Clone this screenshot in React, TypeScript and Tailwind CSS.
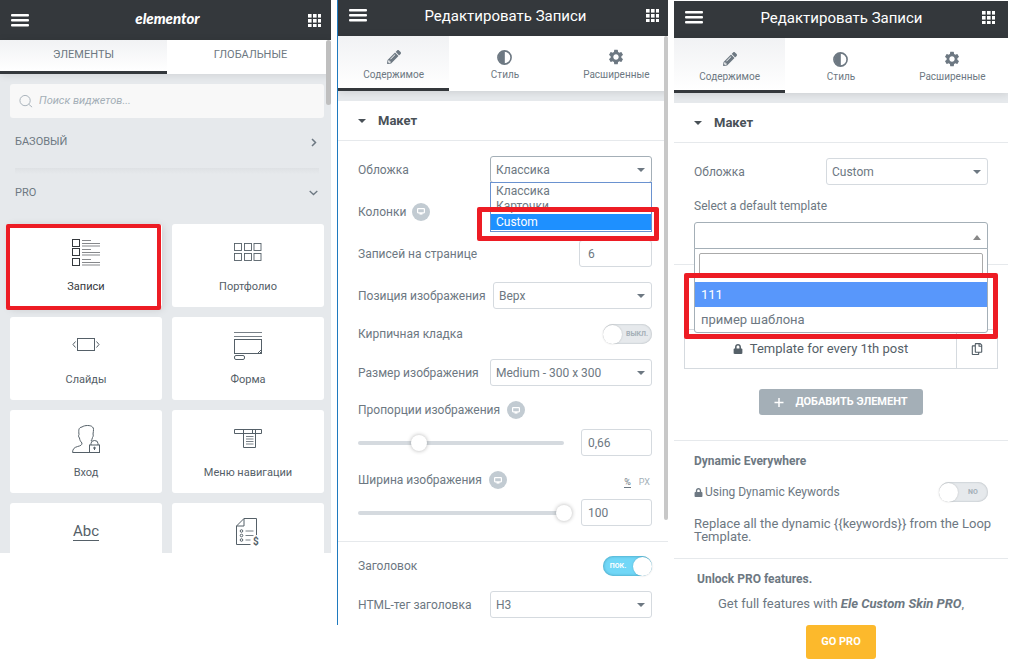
import React, { ReactNode, useState } from "react";
import { FaLock, FaPencilAlt, FaRegCopy } from "react-icons/fa";
import { MdSettings } from "react-icons/md";

function MenuIcon() {
  return (
    <svg width="18" height="13" viewBox="0 0 18 13" fill="currentColor" aria-hidden="true">
      <rect width="18" height="2.6" rx="1" />
      <rect y="5" width="18" height="2.6" rx="1" />
      <rect y="10" width="18" height="2.6" rx="1" />
    </svg>
  );
}

function GridIcon() {
  const steps = [0, 5, 10];
  return (
    <svg width="13" height="13" viewBox="0 0 13 13" fill="currentColor" aria-hidden="true">
      {steps.map((y) => steps.map((x) => <rect key={`${x}-${y}`} x={x} y={y} width="3.6" height="3.6" />))}
    </svg>
  );
}

function ContrastIcon() {
  return (
    <svg width="15" height="15" viewBox="0 0 15 15" aria-hidden="true">
      <circle cx="7.5" cy="7.5" r="6.6" fill="none" stroke="currentColor" strokeWidth="1.6" />
      <path d="M7.8 1v13A6.5 6.5 0 0 1 7.8 1z" fill="currentColor" />
    </svg>
  );
}

function PanelHeader({ tall, children }: { tall?: boolean; children: ReactNode }) {
  return (
    <header className={`flex items-center justify-between bg-[#34383c] pl-[11px] pr-[13px] text-white ${tall ? "h-10" : "h-[37px] pb-[4px]"}`}>
      <button aria-label="Menu"><MenuIcon /></button>
      {children}
      <button aria-label="Widgets"><GridIcon /></button>
    </header>
  );
}

function EditTabs() {
  const tabs = [
    { label: "Содержимое", icon: <FaPencilAlt size={14} /> },
    { label: "Стиль", icon: <ContrastIcon /> },
    { label: "Расширенные", icon: <MdSettings size={18} /> },
  ];
  return (
    <nav className="relative z-10 grid h-[55px] grid-cols-3 bg-white shadow-[0_1px_8px_rgba(0,0,0,0.12)]">
      {tabs.map((t, i) => (
        <button
          key={t.label}
          className={`flex flex-col items-center gap-px border-b-[3px] pt-3 text-[10px] leading-4 text-[#6d7882] ${
            i === 0 ? "border-[#34383c] bg-linear-to-b from-[#f1f2f4] to-white" : "border-transparent"
          }`}
        >
          <span className="flex h-[18px] items-center">{t.icon}</span>
          {t.label}
        </button>
      ))}
    </nav>
  );
}

function SectionTitle() {
  return (
    <>
      <div className="h-[10px] bg-[#e6e9ec]" />
      <button className="flex h-10 w-full items-center gap-3 border-b border-[#e6e9ec] pl-5 text-[13px] font-bold text-[#495157]">
        <svg width="8" height="4" viewBox="0 0 8 4" fill="currentColor" aria-hidden="true"><path d="M0 0h8L4 4z" /></svg>
        Макет
      </button>
    </>
  );
}

function Select({ id, options, className, active }: { id: string; options: string[]; className: string; active?: boolean }) {
  return (
    <div className={`relative ${className}`}>
      <select
        id={id}
        className={`block h-[27px] w-full appearance-none rounded-[3px] border bg-white pl-[5px] text-[12px] text-[#6d7882] outline-none ${
          active ? "border-[#a4afb7]" : "border-[#d5dadf]"
        }`}
      >
        {options.map((o) => <option key={o}>{o}</option>)}
      </select>
      <svg className="pointer-events-none absolute right-[7px] top-[12px] text-[#6d7882]" width="8" height="4" viewBox="0 0 8 4" fill="currentColor" aria-hidden="true">
        <path d="M0 0h8L4 4z" />
      </svg>
    </div>
  );
}

function Switch({ id, on, text }: { id: string; on?: boolean; text: string }) {
  const [checked, setChecked] = useState(!!on);
  return (
    <label
      htmlFor={id}
      className={`flex h-5 w-[49px] items-center justify-between rounded-full text-[7px] font-bold ${
        checked
          ? "flex-row-reverse bg-[#71d7f7] text-white shadow-[inset_0_0_3px_#3b93b0]"
          : "bg-[#e6e9ec] text-[#a4afb7] shadow-[inset_0_0_2px_#a4abb1]"
      }`}
    >
      <input id={id} type="checkbox" className="sr-only" checked={checked} onChange={() => setChecked(!checked)} />
      <span className="size-[19px] rounded-full bg-white shadow-[0_0_2px_rgba(0,0,0,0.2)]" />
      <span className="flex-1 text-center">{text}</span>
    </label>
  );
}

function Desktop() {
  return (
    <button aria-label="Desktop" className="flex size-[18px] items-center justify-center rounded-full bg-[#c2cbd2] text-white">
      <svg width="8" height="7" viewBox="0 0 8 7" aria-hidden="true">
        <rect x=".6" y=".6" width="6.8" height="4.2" rx=".5" fill="none" stroke="currentColor" strokeWidth="1.2" />
        <path d="M2.5 5h3v1.6h-3z" fill="currentColor" />
      </svg>
    </button>
  );
}

function Row({ id, label, children }: { id: string; label: string; children: ReactNode }) {
  return (
    <div className="flex items-center justify-between">
      <label htmlFor={id}>{label}</label>
      {children}
    </div>
  );
}

function NumberBox({ id, value, className }: { id: string; value: string; className: string }) {
  return (
    <input
      id={id}
      defaultValue={value}
      className={`h-[27px] rounded-[3px] border border-[#d5dadf] bg-white text-[12px] text-[#6d7882] outline-none ${className}`}
    />
  );
}

function SliderField({ id, label, value, display, units }: { id: string; label: string; value: number; display: string; units?: boolean }) {
  return (
    <div className="flex flex-col gap-[10px]">
      <div className="flex h-[18px] items-center">
        <label htmlFor={id} className="mr-[7px]">{label}</label>
        <Desktop />
        {units && (
          <div className="ml-auto flex gap-2 pr-[2px] pt-1 text-[9px] leading-[10px]">
            <button className="border-b border-[#6d7882]">%</button>
            <button className="text-[#a4afb7]">PX</button>
          </div>
        )}
      </div>
      <div className="flex items-center">
        <div className="relative min-w-0 flex-1">
          <span className="absolute left-0 right-2 top-[6px] h-1 rounded-full bg-[#d5dadf]" />
          <input
            id={id}
            type="range"
            defaultValue={value}
            className="relative block h-4 w-full appearance-none bg-transparent [&::-webkit-slider-thumb]:size-4 [&::-webkit-slider-thumb]:appearance-none [&::-webkit-slider-thumb]:rounded-full [&::-webkit-slider-thumb]:bg-white [&::-webkit-slider-thumb]:shadow-[0_0_4px_rgba(0,0,0,0.3)]"
          />
        </div>
        <NumberBox id={`${id}-value`} value={display} className="ml-[9px] w-[71px] pl-[6px]" />
      </div>
    </div>
  );
}

const stroke = { fill: "none", stroke: "currentColor", strokeWidth: 1 };

function PostsIcon() {
  return (
    <svg width="28" height="28" viewBox="0 0 28 28" {...stroke} aria-hidden="true">
      {[0, 9, 19].map((y) => (
        <g key={y}>
          <rect x=".5" y={y + 0.5} width="7" height="7" />
          <path d={`M10 ${y + 1.5}h9M10 ${y + 4.5}h18M10 ${y + 7}h18`} strokeWidth=".6" />
        </g>
      ))}
    </svg>
  );
}

function PortfolioIcon() {
  return (
    <svg width="28" height="28" viewBox="0 0 28 28" {...stroke} aria-hidden="true">
      {[4.5, 14.5].map((y) => [0.5, 10.5, 20].map((x) => <rect key={`${x}-${y}`} x={x} y={y} width="7" height="7" strokeWidth=".9" />))}
    </svg>
  );
}

function SlidesIcon() {
  return (
    <svg width="28" height="28" viewBox="0 0 28 28" {...stroke} aria-hidden="true">
      <rect x="5.5" y="6.5" width="17" height="12" />
      <path d="M3.5 9.5L1 12.5l2.5 3M24.5 9.5l2.5 3-2.5 3" />
    </svg>
  );
}

function FormIcon() {
  return (
    <svg width="28" height="28" viewBox="0 0 28 28" {...stroke} aria-hidden="true">
      <path d="M0 .5h28M0 4.5h28" strokeWidth=".8" />
      <rect x=".5" y="7.5" width="27" height="14" />
      <path d="M27 18l-3 3M27 20l-1 1" />
      <rect x=".5" y="23.5" width="10" height="4" rx="1.5" />
    </svg>
  );
}

function LoginIcon() {
  return (
    <svg width="28" height="28" viewBox="0 0 28 28" {...stroke} aria-hidden="true">
      <path d="M17 27.5H.6c0-3.500 1.500-5 5-6 3-.8 4.400-1.300 4.400-3.500-1.500-1.500-2.300-3-2.500-5-1.300-1.500-1-2.500-.5-3.500C6.500 5 6.500 2.500 10 2c2.500-2 9-2 10.500 0 1.500 1 1 3.500.5 7 .5 1.500.2 2.500-.5 3.500-.3 1.500-.8 2.500-1.500 3.500" />
      <rect x="17.500" y="20" width="10" height="7.500" />
      <path d="M19 20v-1.500a3.500 3 0 0 1 7 0V20M22.500 22.500v2.500" />
      <circle cx="22.500" cy="23" r=".8" fill="currentColor" />
    </svg>
  );
}

function NavMenuIcon() {
  return (
    <svg width="28" height="28" viewBox="0 0 28 28" {...stroke} aria-hidden="true">
      <path d="M.5 4.500h27v4H.5zM9.500 4.500v18h12V4.500M18.500 4.500v4" />
      <path d="M12 11.500h7.500M12 14h7.500M12 16.500h7.500M12 19h7.500" strokeWidth=".8" />
    </svg>
  );
}

function HeadlineIcon() {
  return (
    <span className="block text-[15px] leading-7">
      <span className="border-b border-current leading-[15px]">Abc</span>
    </span>
  );
}

function PriceListIcon() {
  return (
    <svg width="28" height="28" viewBox="0 0 28 28" {...stroke} className="overflow-visible" aria-hidden="true">
      <path d="M16.500 26.500H2.500V8L10 .5h12.500V17M2.500 8H10V.5" />
      <circle cx="7.500" cy="13" r="1.300" /><circle cx="7.500" cy="17.500" r="1.300" /><circle cx="7.500" cy="22" r="1.300" />
      <path d="M11.500 13h8M11.500 17.500h8M11.500 22h5" strokeWidth=".8" />
      <text x="19" y="27" fill="currentColor" stroke="none" fontSize="10" fontWeight="700">$</text>
    </svg>
  );
}

const widgets = [
  { label: "Записи", icon: <PostsIcon />, marked: true },
  { label: "Портфолио", icon: <PortfolioIcon /> },
  { label: "Слайды", icon: <SlidesIcon /> },
  { label: "Форма", icon: <FormIcon /> },
  { label: "Вход", icon: <LoginIcon /> },
  { label: "Меню навигации", icon: <NavMenuIcon /> },
];

function WidgetsPanel() {
  return (
    <section className="relative overflow-hidden bg-[#e6e9ec]">
      <div className="-mr-[3px]">
        <PanelHeader tall>
          <h1 className="pb-1 pr-[2px] font-['Lato',sans-serif] text-[15px] font-black italic leading-5">elementor</h1>
        </PanelHeader>
        <nav className="grid h-[34px] grid-cols-2 bg-white text-[11px] text-[#6d7882] shadow-[0_1px_8px_rgba(0,0,0,0.1)]">
          <button className="border-b-[3px] border-[#34383c] bg-linear-to-b from-[#f1f2f4] to-white">ЭЛЕМЕНТЫ</button>
          <button className="border-b-[3px] border-transparent">ГЛОБАЛЬНЫЕ</button>
        </nav>
      </div>
      <div className="absolute right-0 top-10 z-20 h-[65px] w-[5px] rounded-[3px] bg-[#bfbfbf]" />
      <div className="pl-[10px] pr-[7px] pt-[10px]">
        <label className="flex h-[34px] items-center gap-[6px] rounded-[3px] bg-[#f8f8f8] pl-[9px] text-[#a4afb7]">
          <svg width="15" height="15" viewBox="0 0 15 15" {...stroke} aria-hidden="true">
            <circle cx="6.500" cy="6.500" r="5.500" /><path d="M10.500 10.500l3.500 3" />
          </svg>
          <input aria-label="Поиск виджетов" placeholder="Поиск виджетов..." className="w-full bg-transparent text-[11px] italic outline-none placeholder:text-[#a4afb7]" />
        </label>
        <button className="flex h-12 w-full items-center justify-between pl-[5px] pr-[7px] text-[11px]">
          БАЗОВЫЙ
          <svg width="6" height="9" viewBox="0 0 6 9" fill="none" stroke="currentColor" strokeWidth="1.500" aria-hidden="true"><path d="M1 1l3.500 3.500L1 8" /></svg>
        </button>
        <div className="mx-[5px] mt-[2px] h-[6px] bg-linear-to-b from-[#dee1e4] to-[#e6e9ec]" />
        <button className="mb-3 flex h-[38px] w-full items-center justify-between pl-[5px] pr-[6px] text-[11px]">
          PRO
          <svg width="9" height="6" viewBox="0 0 9 6" fill="none" stroke="currentColor" strokeWidth="1.300" aria-hidden="true"><path d="M.7 1l3.800 3.500L8.300 1" /></svg>
        </button>
        <div className="grid grid-cols-2 gap-[10px] text-[11px] text-[#556068]">
          {widgets.map((w) => (
            <button key={w.label} className={`relative flex h-[83px] flex-col items-center rounded-[3px] bg-white pt-[15px] ${w.marked ? "text-[#34383c] shadow-[0_2px_8px_rgba(0,0,0,0.15)]" : ""}`}>
              {w.icon}
              <span className="mt-3 leading-4">{w.label}</span>
              {w.marked && <span className="absolute -bottom-[3px] -left-1 right-px top-0 rounded-[2px] border-4 border-[#ed1c24]" />}
            </button>
          ))}
          <button aria-label="Анимированный заголовок" className="flex h-[50px] justify-center rounded-t-[3px] bg-white pt-[14px]"><HeadlineIcon /></button>
          <button aria-label="Прайс-лист" className="flex h-[50px] justify-center rounded-t-[3px] bg-white pt-[15px]"><PriceListIcon /></button>
        </div>
      </div>
    </section>
  );
}

function SkinPanel() {
  return (
    <section className="relative overflow-hidden border-l border-[#1f7abf] bg-white">
      <div className="-mr-1 -mt-px">
        <PanelHeader><h2 className="pr-[2px] text-[15px] leading-5">Редактировать Записи</h2></PanelHeader>
        <EditTabs />
      </div>
      <div className="absolute right-0 top-9 z-20 h-[484px] w-1 rounded-[2px] bg-[#c8c8c8]" />
      <SectionTitle />
      <div className="flex flex-col gap-[15px] py-[15px] pl-5 pr-4">
        <div className="relative">
          <Row id="skin" label="Обложка"><Select id="skin" options={["Классика", "Карточки", "Custom"]} className="w-[162px]" active /></Row>
          <ul role="listbox" aria-label="Обложка" className="absolute right-0 top-[26px] z-10 h-[50px] w-[162px] border border-[#6a92d0] bg-white text-[12px] leading-4">
            <li role="option" aria-selected="false" className="h-[15px] pl-[5px]">Классика</li>
            <li role="option" aria-selected="false" className="h-4 pl-[5px]">Карточки</li>
            <li role="option" aria-selected="true" className="bg-[#1e90ff] pl-[5px] text-white">Custom</li>
          </ul>
          <div className="absolute -right-[7px] top-[51px] z-20 h-[34px] w-[182px] rounded-[2px] border-[5px] border-[#ed1c24]" />
        </div>
        <div className="flex h-[27px] items-center gap-[6px]"><span>Колонки</span><Desktop /></div>
        <Row id="per-page" label="Записей на странице"><NumberBox id="per-page" value="6" className="w-[73px] pl-2" /></Row>
        <Row id="position" label="Позиция изображения"><Select id="position" options={["Верх"]} className="w-[159px]" /></Row>
        <Row id="masonry" label="Кирпичная кладка"><Switch id="masonry" text="ВЫКЛ." /></Row>
        <Row id="size" label="Размер изображения"><Select id="size" options={["Medium - 300 x 300"]} className="w-[162px]" /></Row>
        <SliderField id="ratio" label="Пропорции изображения" value={27} display="0,66" />
        <SliderField id="width" label="Ширина изображения" value={100} display="100" units />
      </div>
      <div className="flex flex-col gap-[15px] border-t border-[#e6e9ec] pb-[7px] pl-5 pr-4 pt-[14px]">
        <Row id="title" label="Заголовок"><Switch id="title" on text="ПОК." /></Row>
        <Row id="tag" label="HTML-тег заголовка"><Select id="tag" options={["H3"]} className="w-[162px]" /></Row>
      </div>
    </section>
  );
}

function TemplatePanel() {
  return (
    <section className="overflow-hidden bg-white pt-px">
      <PanelHeader><h2 className="pr-[2px] text-[15px] leading-5">Редактировать Записи</h2></PanelHeader>
      <EditTabs />
      <SectionTitle />
      <div className="flex flex-col gap-[15px] px-5 py-[15px]">
        <Row id="skin-custom" label="Обложка"><Select id="skin-custom" options={["Custom"]} className="w-[162px]" /></Row>
        <div className="relative">
          <span id="template-label" className="mb-[10px] block leading-3">Select a default template</span>
          <button aria-labelledby="template-label" aria-expanded="true" className="flex h-[27px] w-full items-center justify-end rounded-t-[3px] border border-[#a4afb7] pr-[6px] pt-1">
            <svg width="8" height="5" viewBox="0 0 8 5" fill="#888" aria-hidden="true"><path d="M0 5h8L4 0z" /></svg>
          </button>
          <div className="absolute inset-x-0 top-[48px] z-10 h-[85px] rounded-b-[3px] border border-[#a4afb7] bg-white">
            <div className="px-1 pt-1">
              <input aria-label="Search templates" className="block h-[25px] w-full rounded-[2px] border border-[#aaa] outline-none" />
            </div>
            <ul role="listbox" aria-label="Templates" className="mt-1 text-[13px] leading-[25px]">
              <li role="option" aria-selected="true" className="bg-[#5897fb] pl-[6px] text-white">111</li>
              <li role="option" aria-selected="false" className="pl-[6px]">пример шаблона</li>
            </ul>
          </div>
          <div className="absolute -inset-x-[10px] top-[73px] z-20 h-[66px] rounded-[2px] border-[5px] border-[#ed1c24]" />
        </div>
      </div>
      <div className="flex flex-col items-center border-t border-[#e6e9ec] px-[10px] pb-[25px] pt-16">
        <div className="flex h-10 w-full border border-[#d5dadf] text-[13px] text-[#556068]">
          <button className="flex flex-1 items-center justify-center gap-[7px]"><FaLock size={10} />Template for every 1th post</button>
          <button aria-label="Duplicate" className="flex w-[41px] items-center justify-center border-l border-[#d5dadf]"><FaRegCopy size={12} /></button>
        </div>
        <button className="mt-5 flex h-[26px] items-center gap-[11px] rounded-[3px] bg-[#a4afb7] px-[15px] text-[11px] font-bold text-white">
          <svg width="10" height="9" viewBox="0 0 10 9" stroke="currentColor" strokeWidth="1.500" aria-hidden="true"><path d="M.5 4.500h9M5 0v9" /></svg>
          ДОБАВИТЬ ЭЛЕМЕНТ
        </button>
      </div>
      <div className="flex flex-col gap-[15px] border-t border-[#e6e9ec] pb-[15px] pl-5 pr-4 pt-[14px]">
        <h3 className="font-bold leading-3">Dynamic Everywhere</h3>
        <div className="flex items-center justify-between pr-1">
          <label htmlFor="keywords" className="flex items-center gap-[2px]"><FaLock size={9} />Using Dynamic Keywords</label>
          <Switch id="keywords" text="NO" />
        </div>
        <p className="text-[13px] leading-[13px]">Replace all the dynamic {"{{keywords}}"} from the Loop Template.</p>
      </div>
      <div className="flex flex-col items-center border-t border-[#e6e9ec] pt-[14px]">
        <h3 className="w-full pl-[23px] font-bold leading-3">Unlock PRO features.</h3>
        <p className="mt-[13px] text-[13px] leading-3">Get full features with <b><i>Ele Custom Skin PRO</i></b>,</p>
        <a href="#pro" className="mt-[15px] flex h-[34px] w-[70px] items-center justify-center rounded-[3px] bg-[#fcb92c] text-[11px] font-bold text-white">GO PRO</a>
      </div>
    </section>
  );
}

export default function App() {
  return (
    <main className="grid min-h-screen grid-cols-[331fr_331fr_334fr] items-start gap-[6px] bg-white pr-[2px] font-['Roboto',sans-serif] text-[12px] text-[#6d7882]">
      <WidgetsPanel />
      <SkinPanel />
      <TemplatePanel />
    </main>
  );
}
